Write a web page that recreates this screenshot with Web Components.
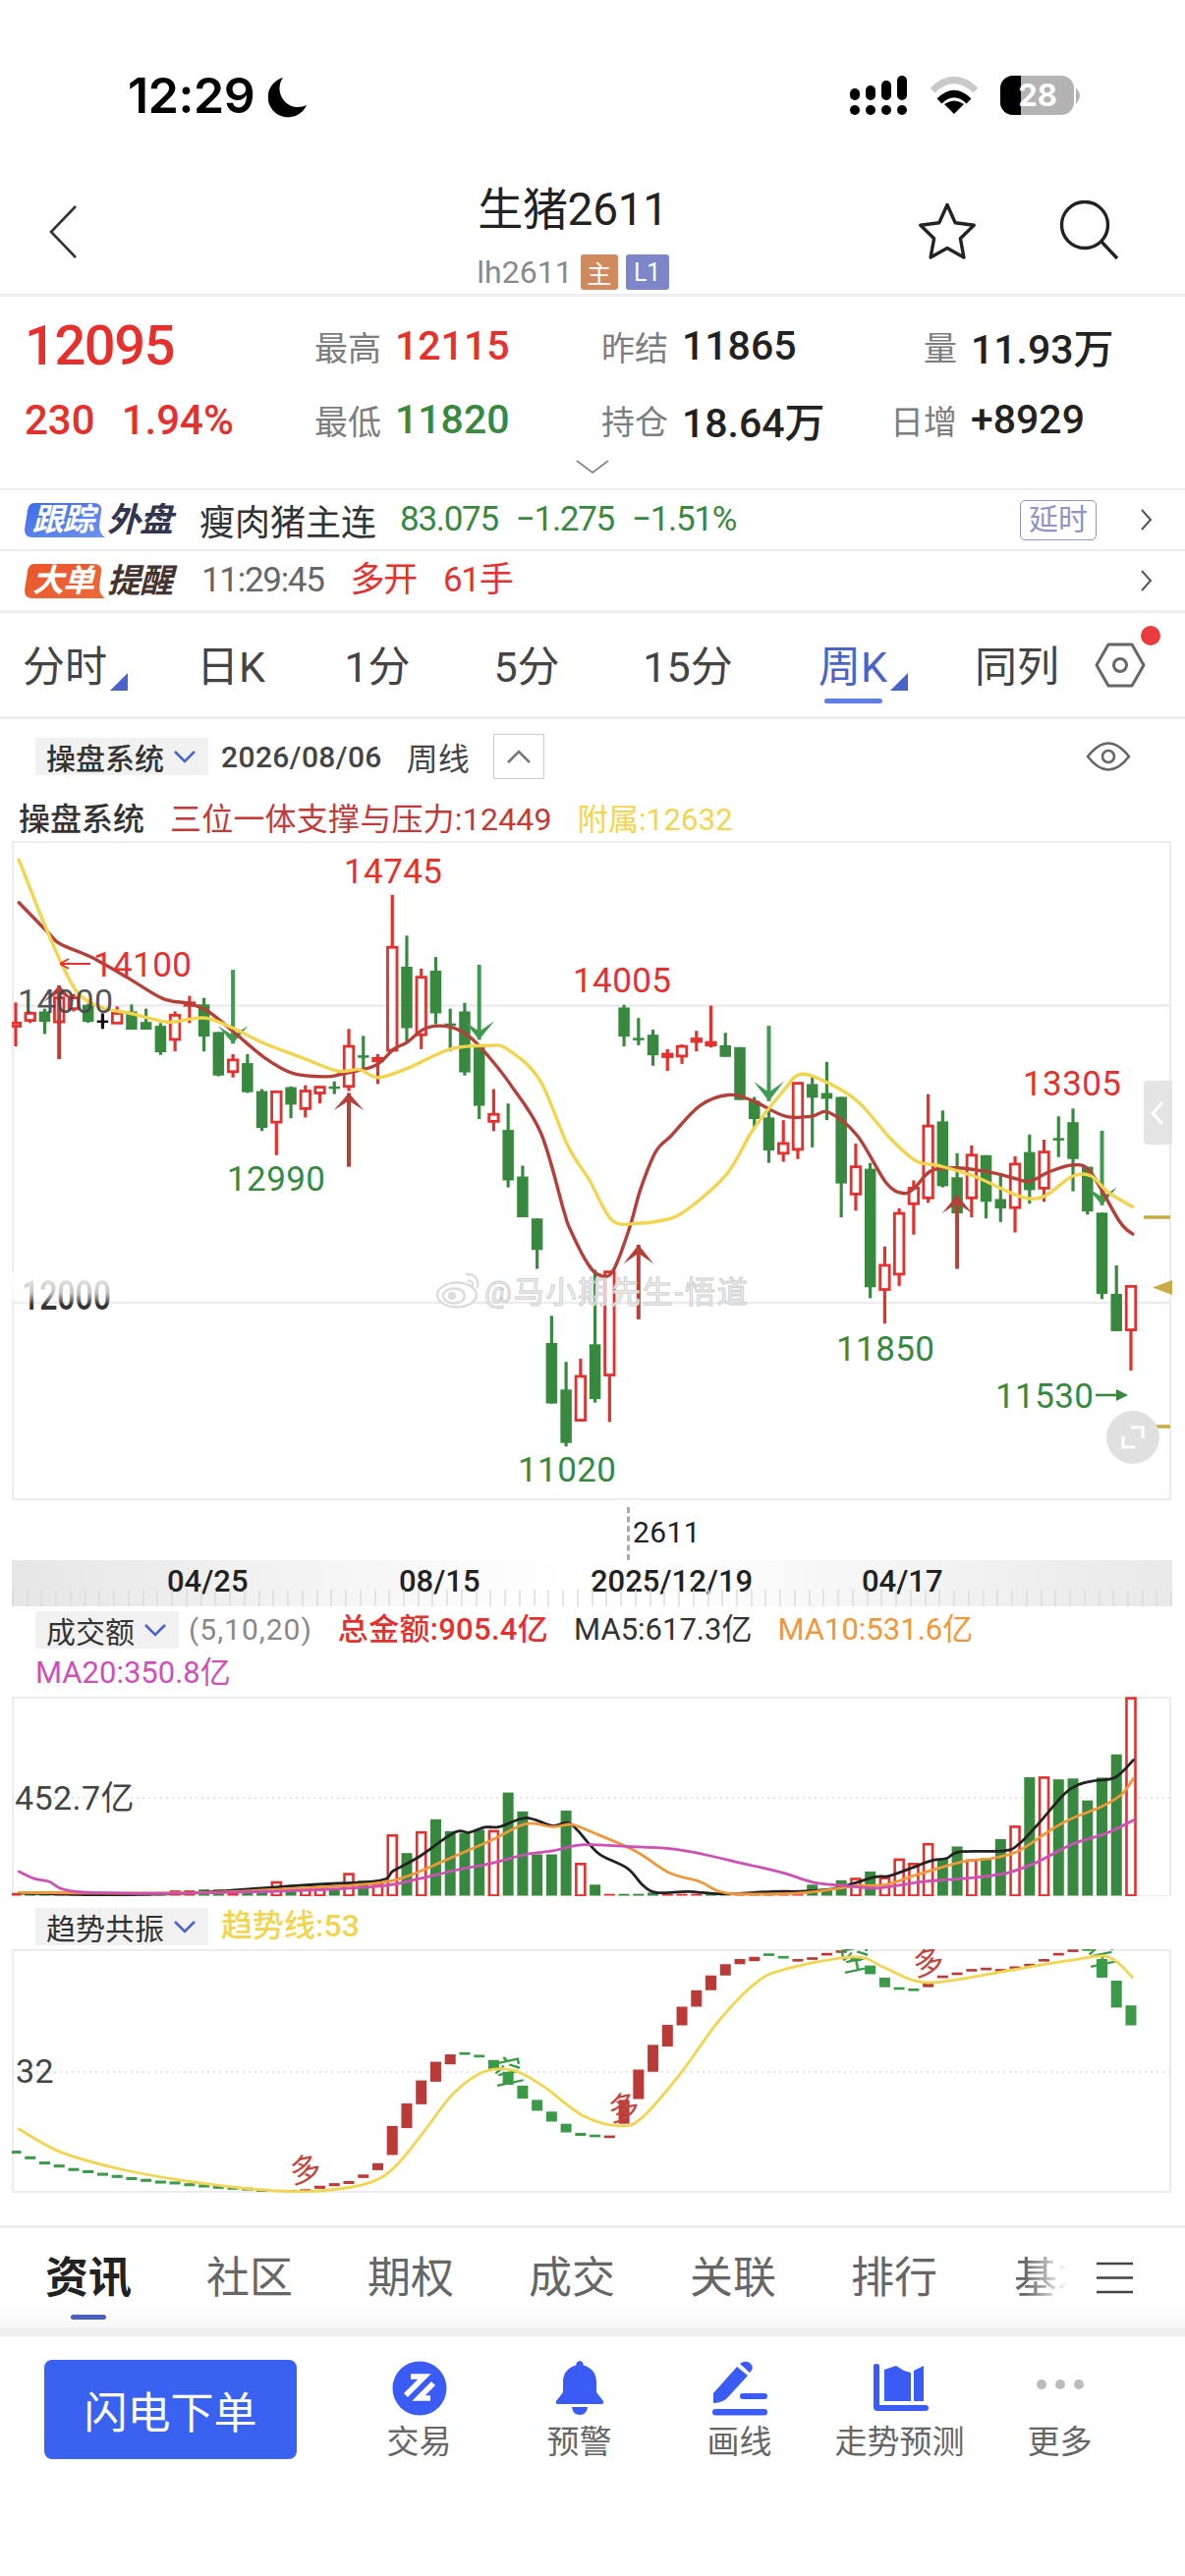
<!DOCTYPE html>
<html lang="zh">
<head>
<meta charset="utf-8">
<title>生猪2611</title>
<style>
  html, body { margin: 0; background: #fff; }
  body {
    width: 1206px;
    height: 2622px;
    overflow: hidden;
    font-family: Roboto, "Noto Sans CJK SC", sans-serif;
    color: #222;
  }
</style>
</head>
<body>
  <status-bar></status-bar>
  <nav-header></nav-header>
  <quote-panel></quote-panel>
  <ticker-row tag="跟踪" tag-color="blue" name="外盘" info="延时" gap="18">
    <span style="font-size:36px;color:#333;margin:0 6px 0 -2px">瘦肉猪主连</span>
    <legend-item color="#38893f" tight>83.075</legend-item>
    <legend-item color="#38893f" tight>−1.275</legend-item>
    <legend-item color="#38893f" tight>−1.51%</legend-item>
  </ticker-row>
  <ticker-row tag="大单" tag-color="orange" name="提醒" gap="27" last>
    <legend-item color="#666" tight>11:29:45</legend-item>
    <legend-item color="#e5302e" tight>多开</legend-item>
    <legend-item color="#e5302e" tight>61手</legend-item>
  </ticker-row>
  <period-tabs></period-tabs>
  <chart-toolbar></chart-toolbar>
  <kline-chart></kline-chart>
  <time-axis></time-axis>
  <indicator-head label="成交额" height="92" top="4" shift="10">
    <legend-item color="#888" size="30" spacing="1">(5,10,20)</legend-item>
    <legend-item color="#e5302e" size="31" weight="500" spacing=".3">总金额:905.4亿</legend-item>
    <legend-item color="#333" size="31">MA5:617.3亿</legend-item>
    <legend-item color="#f0973a" size="31">MA10:531.6亿</legend-item>
    <legend-item slot="second" color="#cf50b5" size="31">MA20:350.8亿</legend-item>
  </indicator-head>
  <volume-chart></volume-chart>
  <indicator-head label="趋势共振" height="54" top="11" shift="13">
    <legend-item color="#f2d44e" size="32" weight="500">趋势线:53</legend-item>
  </indicator-head>
  <trend-chart></trend-chart>
  <info-tabs></info-tabs>
  <bottom-bar></bottom-bar>

<script>
// chart colours
const RED = "#e5302e";
const GREEN = "#38893f";
const YELLOW = "#f2d44e";
const MA_RED = "#b5403a";

// candle slot -> page x
const slotX = (i) => 16 + 14.74 * i;
// traced heights: values under 5000 come from the upper half of the chart, 5000+ from the lower half
const py = (v) => (v < 5000 ? 640 + v / 2.529 : 1250 + (v - 5000) / 2.24);
const ax = (x) => x / 2.596;
const bx = (x) => 600 + x / 2.587;

// smooth line through points (catmull-rom to bezier)
function smoothPath(pts) {
  let d = `M${pts[0][0].toFixed(1)} ${pts[0][1].toFixed(1)}`;
  for (let i = 0; i < pts.length - 1; i++) {
    const p0 = pts[i - 1] || pts[i];
    const p1 = pts[i];
    const p2 = pts[i + 1];
    const p3 = pts[i + 2] || p2;
    const c1 = [p1[0] + (p2[0] - p0[0]) / 6, p1[1] + (p2[1] - p0[1]) / 6];
    const c2 = [p2[0] - (p3[0] - p1[0]) / 6, p2[1] - (p3[1] - p1[1]) / 6];
    d += ` C${c1[0].toFixed(1)} ${c1[1].toFixed(1)} ${c2[0].toFixed(1)} ${c2[1].toFixed(1)} ${p2[0].toFixed(1)} ${p2[1].toFixed(1)}`;
  }
  return d;
}

const traced = (segments) =>
  segments.flatMap(([fx, list]) => list.map(([x, y]) => [fx(x), py(y)]));

const line = (pts, color, w = 3.4) =>
  `<path d="${smoothPath(pts)}" fill="none" stroke="${color}" stroke-width="${w}" stroke-linejoin="round" stroke-linecap="round"/>`;

const label = (x, y, text, fill, size = 35, extra = "") =>
  `<text x="${x}" y="${y}" font-size="${size}" fill="${fill}" letter-spacing="0.4" ${extra}>${text}</text>`;

/* ---------- small shared bits ---------- */

class LegendItem extends HTMLElement {
  constructor() {
    super();
    this.attachShadow({ mode: "open" });
  }
  connectedCallback() {
    const size = this.hasAttribute("tight") ? 35 : this.getAttribute("size") || 32;
    const spacing = this.hasAttribute("tight") ? -1.3 : this.getAttribute("spacing") || 0;
    this.shadowRoot.innerHTML = /*html*/ `
      <style>
        :host { display: inline-block; white-space: nowrap; line-height: 1.2; }
      </style>
      <span style="color:${this.getAttribute("color")};font-size:${size}px;font-weight:${this.getAttribute("weight") || 400};letter-spacing:${spacing}px"><slot></slot></span>
    `;
  }
}
customElements.define("legend-item", LegendItem);

class IndicatorPill extends HTMLElement {
  constructor() {
    super();
    this.attachShadow({ mode: "open" });
    this.shadowRoot.innerHTML = /*html*/ `
      <style>
        :host {
          display: inline-flex;
          align-items: center;
          gap: 9px;
          height: 38px;
          padding: 0 12px 0 11px;
          background: #f1f1f1;
          font-size: 30px;
          color: #333;
          white-space: nowrap;
        }
      </style>
      <slot></slot>
      <svg width="24" height="14" viewBox="0 0 24 14"><path d="M2 2l10 10L22 2" fill="none" stroke="#4a63c8" stroke-width="2.6"/></svg>
    `;
  }
}
customElements.define("indicator-pill", IndicatorPill);

/* ---------- top of page ---------- */

class StatusBar extends HTMLElement {
  constructor() {
    super();
    this.attachShadow({ mode: "open" });
    this.shadowRoot.innerHTML = /*html*/ `
      <style>
        :host { display: flex; height: 170px; align-items: flex-start; padding: 70px 0 0 130px; box-sizing: border-box; }
        .time { font: 600 50px/54px Inter, sans-serif; letter-spacing: -.4px; color: #000; width: 143px; white-space: nowrap; }
        .moon { margin-top: 8px; }
        .icons { margin-left: 547px; margin-top: 0; }
        text { font: 700 31px Inter, sans-serif; }
      </style>
      <span class="time">12:29</span>
      <svg class="moon" width="40" height="42" viewBox="0 0 40 42"><path d="M15 1A20.5 20.5 0 1 0 39 29A19 19 0 0 1 15 1Z" fill="#000"/></svg>
      <svg class="icons" width="245" height="55" viewBox="860 70 245 55">
        <g fill="#000">
          <rect x="865" y="90" width="10" height="12" rx="5"/><rect x="881" y="87" width="10" height="15" rx="5"/>
          <rect x="897" y="82" width="10" height="20" rx="5"/><rect x="913" y="77" width="10" height="25" rx="5"/>
          <rect x="865" y="107" width="10" height="10" rx="5"/><rect x="881" y="107" width="10" height="10" rx="5"/>
          <rect x="897" y="107" width="10" height="10" rx="5"/><rect x="913" y="107" width="10" height="10" rx="5"/>
        </g>
        <path d="M949 92Q971 71 993 92" fill="none" stroke="#c9c9c9" stroke-width="7"/>
        <path d="M956 103Q971 88 986 103" fill="none" stroke="#000" stroke-width="7"/>
        <path d="M971 116L961 106Q971 99 981 106Z" fill="#000"/>
        <rect x="1018" y="77" width="75" height="40" rx="13" fill="#b3b3b3"/>
        <path d="M1031 77H1039V117H1031A13 13 0 0 1 1018 104V90A13 13 0 0 1 1031 77Z" fill="#000"/>
        <path d="M1096 92Q1100 97 1096 103Z" fill="#b3b3b3" stroke="#b3b3b3" stroke-width="2"/>
        <text x="1056" y="108" text-anchor="middle" fill="#fff">28</text>
      </svg>
    `;
  }
}
customElements.define("status-bar", StatusBar);

class NavHeader extends HTMLElement {
  constructor() {
    super();
    this.attachShadow({ mode: "open" });
    this.shadowRoot.innerHTML = /*html*/ `
      <style>
        :host { display: flex; height: 132px; box-sizing: border-box; border-bottom: 3px solid #eee; align-items: flex-start; }
        .back { margin: 38px 0 0 49px; }
        .center { width: 400px; margin: 20px 0 0 304px; display: flex; flex-direction: column; align-items: center; }
        .title { font-size: 46px; line-height: 46px; color: #222; letter-spacing: -.3px; }
        .sub { display: flex; align-items: center; gap: 8px; margin-top: 22px; height: 38px; font-size: 32px; color: #8a8a8a; }
        .badge { display: flex; align-items: center; justify-content: center; height: 36px; border-radius: 3px; color: #fff; font-size: 25px; }
        .zhu { width: 38px; background: #d08a5e; }
        .l1 { width: 44px; background: #7f85c9; }
        .star { margin: 35px 0 0 150px; }
        .search { margin: 34px 0 0 82px; }
      </style>
      <svg class="back" width="30" height="56" viewBox="0 0 30 56"><path d="M28 2L3 28l25 26" fill="none" stroke="#333" stroke-width="2.6"/></svg>
      <div class="center">
        <div class="title">生猪2611</div>
        <div class="sub"><span>lh2611</span><span class="badge zhu">主</span><span class="badge l1">L1</span></div>
      </div>
      <svg class="star" width="62" height="62" viewBox="0 0 62 62"><path d="M31 3.5l8.2 18.2 19 2.6-13.8 13.4 3.5 19.3L31 47.5l-16.9 9.5 3.5-19.3L3.8 24.3l19-2.6z" fill="none" stroke="#222" stroke-width="3.4" stroke-linejoin="round"/></svg>
      <svg class="search" width="62" height="62" viewBox="1076 204 62 62"><circle cx="1103" cy="229" r="23.5" fill="none" stroke="#222" stroke-width="3.4"/><path d="M1120 246l16 17" stroke="#222" stroke-width="3.4" fill="none"/></svg>
    `;
  }
}
customElements.define("nav-header", NavHeader);

class StatCell extends HTMLElement {
  constructor() {
    super();
    this.attachShadow({ mode: "open" });
  }
  connectedCallback() {
    this.shadowRoot.innerHTML = /*html*/ `
      <style>
        :host { display: flex; align-items: center; gap: 14px; white-space: nowrap; }
        .k { width: 68px; text-align: right; font-size: 34px; color: #7d7d7d; white-space: nowrap; direction: rtl; }
        .v { font-size: 41px; font-weight: 500; color: ${this.getAttribute("color") || "#222"}; }
      </style>
      <span class="k">${this.getAttribute("label")}</span>
      <span class="v">${this.getAttribute("value")}</span>
    `;
  }
}
customElements.define("stat-cell", StatCell);

class QuotePanel extends HTMLElement {
  constructor() {
    super();
    this.attachShadow({ mode: "open" });
    this.shadowRoot.innerHTML = /*html*/ `
      <style>
        :host { display: block; height: 197px; box-sizing: border-box; border-bottom: 2px solid #eee; padding: 20px 0 0 25px; position: relative; }
        .grid {
          display: grid;
          grid-template-columns: 295px 292px 294px 1fr;
          grid-auto-rows: 60px;
          row-gap: 15px;
          align-items: center;
        }
        .price { font-size: 56px; font-weight: 500; color: ${RED}; letter-spacing: -1.4px; line-height: 60px; }
        .chg { font-size: 42px; font-weight: 500; color: ${RED}; display: flex; gap: 27px; }
        .more { position: absolute; left: 586px; top: 166px; }
      </style>
      <div class="grid">
        <div class="price">12095</div>
        <stat-cell label="最高" value="12115" color="${RED}"></stat-cell>
        <stat-cell label="昨结" value="11865"></stat-cell>
        <stat-cell label="量" value="11.93万"></stat-cell>
        <div class="chg"><span>230</span><span>1.94%</span></div>
        <stat-cell label="最低" value="11820" color="${GREEN}"></stat-cell>
        <stat-cell label="持仓" value="18.64万"></stat-cell>
        <stat-cell label="日增" value="+8929"></stat-cell>
      </div>
      <svg class="more" width="34" height="14" viewBox="0 0 34 14"><path d="M1 1l16 12L33 1" fill="none" stroke="#888" stroke-width="1.8"/></svg>
    `;
  }
}
customElements.define("quote-panel", QuotePanel);

class TickerRow extends HTMLElement {
  constructor() {
    super();
    this.attachShadow({ mode: "open" });
  }
  connectedCallback() {
    const blue = this.getAttribute("tag-color") === "blue";
    const info = this.getAttribute("info");
    const last = this.hasAttribute("last");
    this.shadowRoot.innerHTML = /*html*/ `
      <style>
        :host {
          display: flex; align-items: center; box-sizing: border-box;
          height: ${last ? 63 : 62}px; padding-left: 25px;
          border-bottom: ${last ? 3 : 2}px solid #eee;
        }
        .tag { position: relative; width: 82px; height: 35px; display: flex; align-items: center; justify-content: center; }
        .tag svg { position: absolute; inset: 0; }
        .tag span { position: relative; color: #fff; font-size: 32px; font-weight: 700; font-style: italic; line-height: 35px; margin-right: 4px; letter-spacing: -1px; }
        .name { width: 72px; margin-left: 2px; font-size: 34px; line-height: 35px; font-weight: 700; font-style: italic; color: ${blue ? "#33344d" : "#44332e"}; letter-spacing: -1px; }
        .body { display: flex; align-items: center; gap: ${this.getAttribute("gap")}px; margin-left: 24px; flex: 1; white-space: nowrap; }
        .info { width: 78px; height: 41px; box-sizing: border-box; border: 1.5px solid #8f93c9; border-radius: 5px; color: #8f93c9; font-size: 30px; line-height: 38px; text-align: center; margin-right: 44px; }
        .arrow { margin-right: 33px; }
      </style>
      <div class="tag">
        <svg width="82" height="35" viewBox="0 0 82 35">
          <defs><linearGradient id="g" x1="0" y1="0" x2="1" y2="1"><stop offset="0" stop-color="${blue ? "#3f6be8" : "#e8552b"}"/><stop offset="1" stop-color="${blue ? "#6c93f0" : "#ee6a3a"}"/></linearGradient></defs>
          <path d="M10 0H70Q79 0 78 8L76 23Q76 31 82 35H8Q0 35 0 27L3 8Q4 0 10 0Z" fill="url(#g)"/>
        </svg>
        <span>${this.getAttribute("tag")}</span>
      </div>
      <div class="name">${this.getAttribute("name")}</div>
      <div class="body"><slot></slot></div>
      ${info ? `<div class="info">${info}</div>` : ""}
      <svg class="arrow" width="13" height="24" viewBox="0 0 13 24"><path d="M2 2l9 10-9 10" fill="none" stroke="#555" stroke-width="2"/></svg>
    `;
  }
}
customElements.define("ticker-row", TickerRow);

/* ---------- period tabs ---------- */

class PeriodTabs extends HTMLElement {
  constructor() {
    super();
    this.attachShadow({ mode: "open" });
    const tabs = [
      ["分时", true],
      ["日K"],
      ["1分"],
      ["5分"],
      ["15分"],
      ["周K", true, true],
      ["同列"],
    ];
    this.shadowRoot.innerHTML = /*html*/ `
      <style>
        :host {
          display: grid; box-sizing: border-box; height: 108px; border-bottom: 3px solid #eee;
          grid-template-columns: 132px 206px 92px 212px 116px 220px 114px 96px;
          align-items: center; position: relative;
        }
        .tab { text-align: center; font-size: 43px; color: #444; white-space: nowrap; position: relative; padding-bottom: 4px; }
        .tab b { font-weight: 400; position: relative; display: inline-block; }
        .tab b i { position: absolute; left: calc(100% + 3px); bottom: 3px; width: 0; height: 0; border-style: solid; border-width: 0 0 18px 18px; border-color: transparent transparent #4a63c8 transparent; }
        .on { color: #4a63c8; }
        .under { position: absolute; left: 839px; top: 87px; width: 59px; height: 5px; border-radius: 3px; background: #5b80ea; }
        .hex { justify-self: center; margin-left: 0; }
        .dot { position: absolute; left: 1161px; top: 13px; width: 20px; height: 20px; border-radius: 50%; background: #ea3c3c; }
      </style>
      ${tabs
        .map(
          ([t, tri, on]) => /*html*/ `
            <div class="tab ${on ? "on" : ""}"><b>${t}${tri ? "<i></i>" : ""}</b></div>
          `
        )
        .join("")}
      <svg class="hex" width="52" height="46" viewBox="0 0 52 46"><path d="M14 2h24l12 21-12 21H14L2 23z" fill="none" stroke="#666" stroke-width="3" stroke-linejoin="round"/><circle cx="26" cy="23" r="6.5" fill="none" stroke="#666" stroke-width="3"/></svg>
      <span class="under"></span>
      <span class="dot"></span>
    `;
  }
}
customElements.define("period-tabs", PeriodTabs);

class ChartToolbar extends HTMLElement {
  constructor() {
    super();
    this.attachShadow({ mode: "open" });
    this.shadowRoot.innerHTML = /*html*/ `
      <style>
        :host { display: block; height: 124px; box-sizing: border-box; padding-top: 18px; }
        .top { display: flex; align-items: center; height: 40px; padding-left: 36px; color: #444; font-size: 30px; font-weight: 500; white-space: nowrap; }
        .date { margin-left: 13px; letter-spacing: .4px; }
        .week { margin-left: 25px; font-size: 32px; font-weight: 400; }
        .box { margin-left: 24px; width: 52px; height: 46px; box-sizing: border-box; border: 1.5px solid #ccc; display: flex; align-items: center; justify-content: center; }
        .eye { margin-left: auto; margin-right: 55px; }
        .legend { display: flex; align-items: center; gap: 26px; margin-top: 25px; padding-left: 19px; }
      </style>
      <div class="top">
        <indicator-pill>操盘系统</indicator-pill>
        <span class="date">2026/08/06</span>
        <span class="week">周线</span>
        <span class="box"><svg width="26" height="15" viewBox="0 0 26 15"><path d="M2 13L13 2l11 11" fill="none" stroke="#777" stroke-width="2.6"/></svg></span>
        <svg class="eye" width="46" height="30" viewBox="0 0 46 30"><path d="M2 15Q23 -12 44 15Q23 42 2 15Z" fill="none" stroke="#666" stroke-width="2.6"/><circle cx="23" cy="15" r="6" fill="none" stroke="#666" stroke-width="2.6"/></svg>
      </div>
      <div class="legend">
        <legend-item color="#333" size="32" weight="500">操盘系统</legend-item>
        <legend-item color="#c23a37" size="32" spacing=".2">三位一体支撑与压力:12449</legend-item>
        <legend-item color="#f2d44e" size="31" spacing=".2">附属:12632</legend-item>
      </div>
    `;
  }
}
customElements.define("chart-toolbar", ChartToolbar);

/* ---------- main candle chart ---------- */

// colour, wick top, body top, body bottom, wick bottom
const CANDLES = [
  ["r",962,1015,1023,1075],["r",985,990,1008,1015],["g",978,985,1012,1043],["r",920,950,1012,1012],
  ["r",940,950,978,985],["g",965,968,1012,1014],["k",990,1008,1012,1030],["r",972,990,1015,1015],
  ["g",967,985,1032,1032],["g",978,1012,1032,1032],["g",1015,1022,1090,1097],["r",985,995,1057,1088],
  ["r",945,963,967,1015],["g",950,967,1050,1088],["g",1038,1038,1150,1152],["r",1095,1110,1140,1155],
  ["g",1095,1118,1193,1195],["g",1185,1190,1285,1293],["r",1190,1192,1270,1355],["g",1178,1180,1225,1260],
  ["r",1175,1190,1235,1258],["r",1178,1180,1195,1222],["g",1165,1178,1182,1198],["r",1030,1075,1178,1190],
  ["g",1048,1098,1102,1138],["r",1095,1106,1110,1172],["r",685,820,1085,1085],["g",790,870,1028,1065],
  ["r",875,897,1045,1082],["g",845,880,990,1018],["g",978,1016,1020,1088],["g",963,985,1142,1150],
  ["g",1075,1075,1228,1262],["r",1185,1250,1268,1293],["g",1222,1290,1420,1438],["g",1382,1410,1515,1515],
  ["g",1518,1518,5050,5093],["g",5200,5262,5400,5400],["g",5305,5368,5490,5498],["r",5298,5338,5438,5438],
  ["g",5095,5265,5390,5398],["r",5098,5100,5335,5442],["g",968,975,1050,1075],["g",1002,1053,1057,1072],
  ["g",1032,1045,1098,1125],["r",1082,1095,1099,1138],["r",1070,1075,1100,1120],["r",1035,1056,1060,1088],
  ["r",970,1065,1069,1078],["g",1040,1072,1102,1102],["g",1077,1077,1213,1213],["g",1205,1215,1262,1285],
  ["g",1240,1258,1343,1375],["r",1265,1325,1350,1372],["r",1170,1170,1340,1365],["g",1148,1172,1207,1335],
  ["g",1115,1195,1210,1265],["g",1205,1205,1428,1515],["r",1325,1385,1455,1498],["g",1375,1390,5135,5160],
  ["r",5042,5085,5140,5218],["r",1492,1505,5105,5132],["r",1420,1440,1480,5015],["r",1198,1280,1465,1478],
  ["g",1240,1268,1435,1438],["g",1350,1412,1505,1505],["r",1330,1355,1465,1515],["g",1355,1355,1475,1518],
  ["g",1405,1468,1492,1527],["r",1358,1378,1490,5010],["g",1302,1347,1445,1480],["r",1315,1347,1440,1475],
  ["g",1255,1311,1316,1360],["g",1235,1270,1365,1448],["g",1385,1385,1500,1508],["g",1503,1503,5150,5162],
  ["g",5085,5150,5235,5235],["r",5130,5133,5232,5325],
];

const MA_MAIN = traced([
  [ax, [[50,705],[130,785],[160,812],[240,845],[340,900],[430,952],[500,965],[550,985],[620,1040],[700,1105],[775,1145],[860,1153],[900,1147],[990,1125],[1040,1082],[1075,1065],[1125,1028],[1190,1025],[1240,1050],[1290,1100],[1350,1175],[1430,1300],[1490,1500]]],
  [ax, [[1505,5000],[1545,5070]]],
  [bx, [[20,5105],[60,5100],[105,5000]]],
  [bx, [[135,1440],[175,1345],[215,1305],[290,1228],[365,1200],[430,1215],[515,1255],[585,1255],[630,1245],[705,1305],[780,1425],[825,1453],[855,1440],[900,1395],[970,1388],[1060,1400],[1120,1415],[1160,1422],[1210,1398],[1275,1380],[1320,1400],[1395,1525],[1430,1558]]],
]);

const MA_SUB = traced([
  [ax, [[50,595],[130,790],[200,930],[270,975],[345,990],[440,1012],[500,1005],[550,1003],[620,1030],[700,1068],[800,1105],[890,1138],[950,1135],[1000,1155],[1080,1130],[1190,1082],[1290,1073],[1340,1082],[1425,1160],[1500,1330]]],
  [bx, [[0,1420],[60,1523],[130,1530],[180,1525],[245,1503],[360,1405],[430,1290],[510,1190],[555,1147],[630,1170],[710,1220],[790,1310],[860,1370],[920,1382],[1015,1410],[1130,1460],[1195,1462],[1270,1410],[1320,1408],[1365,1450],[1430,1488]]],
]);

function candle([c, hi, top, bot, lo], i) {
  const x = slotX(i);
  const color = c === "g" ? GREEN : c === "r" ? RED : "#111";
  const w = 11.5;
  const y1 = py(top);
  const h = Math.max(py(bot) - y1, 2.5);
  const wick = `<path d="M${x} ${py(hi)}V${py(lo)}" stroke="${color}" stroke-width="3.2"/>`;
  if (c === "r") {
    return `${wick}<rect x="${x - w / 2 + 1}" y="${y1}" width="${w - 2}" height="${h}" fill="#fff" stroke="${color}" stroke-width="2.8"/>`;
  }
  return `${wick}<rect x="${x - w / 2}" y="${y1}" width="${w}" height="${h}" fill="${color}"/>`;
}

// down = green sell arrow, up = red buy arrow
function signal(i, from, to, wing, dir) {
  const x = slotX(i);
  const color = dir === "up" ? MA_RED : "#409a50";
  const tip = py(to);
  const wy = py(wing);
  const notch = tip + (wy - tip) * 0.45;
  return `<path d="M${x} ${py(from)}V${tip}" stroke="${color}" stroke-width="4"/>
    <path d="M${x} ${tip}L${x + 15.5} ${wy}L${x} ${notch}L${x - 15.5} ${wy}Z" fill="${color}"/>`;
}

class KlineChart extends HTMLElement {
  constructor() {
    super();
    this.attachShadow({ mode: "open" });
    this.shadowRoot.innerHTML = /*html*/ `
      <style>
        :host { display: block; width: 1182px; height: 672px; margin-left: 12px; }
        svg { display: block; }
      </style>
      <svg width="1182" height="672" viewBox="12 856 1182 672">
        <defs>
          <linearGradient id="fade" x1="0" y1="0" x2="0" y2="1"><stop offset="0" stop-color="#fff" stop-opacity=".95"/><stop offset=".65" stop-color="#fff" stop-opacity=".7"/><stop offset="1" stop-color="#fff" stop-opacity="0"/></linearGradient>
        </defs>
        <rect x="13" y="857" width="1178" height="669" fill="#fff" stroke="#ececec" stroke-width="2"/>
        <path d="M13 1023.5H1192M13 1326H1192" stroke="#ececec" stroke-width="2.4"/>

        ${CANDLES.map(candle).join("")}

        ${signal(3, 1108, 918, 960, "up")}
        ${signal(23, 1385, 1195, 1240, "up")}
        ${signal(43, 5208, 5038, 5082, "up")}
        ${signal(65, 5093, 1458, 1505, "up")}
        ${signal(15, 878, 1068, 1022, "down")}
        ${signal(32, 865, 1058, 1010, "down")}
        ${signal(52, 1022, 1216, 1165, "down")}
        ${signal(75, 1292, 1484, 1437, "down")}

        ${line(MA_MAIN, MA_RED)}
        ${line(MA_SUB, YELLOW)}

        <path d="M92 981H61M61 981L70 976M61 981L70 986" fill="none" stroke="${RED}" stroke-width="1.8"/>
        ${label(350, 899, "14745", RED)}
        ${label(95, 994, "14100", RED)}
        ${label(231, 1212, "12990", GREEN)}
        ${label(583, 1010, "14005", RED)}
        ${label(1041, 1115, "13305", RED)}
        ${label(851, 1385, "11850", GREEN)}
        ${label(1013, 1433, "11530", GREEN)}
        ${label(527, 1508, "11020", GREEN)}
        <path d="M1115 1420H1143" stroke="${GREEN}" stroke-width="2.6"/><path d="M1148 1420l-12 -6v12z" fill="${GREEN}"/>

        ${label(18, 1031, "14000", "#444", 34, 'fill-opacity=".92"')}
        <text transform="translate(22 1333) scale(1 1.35)" font-size="32" font-weight="500" fill="#333">12000</text>
        <rect x="12" y="1295" width="114" height="33" fill="url(#fade)"/>

        <!-- side widgets -->
        <path d="M1164 1239H1191M1164 1452H1191" stroke="#c9ab45" stroke-width="3.4"/>
        <path d="M1173 1310.5L1193 1303V1318Z" fill="#c9ab45"/>
        <path d="M1193 1100H1168Q1164 1100 1164 1104V1161Q1164 1165 1168 1165H1193Z" fill="#e4e4e4"/>
        <path d="M1183 1122L1173 1133L1183 1144" fill="none" stroke="#fff" stroke-width="3"/>
        <circle cx="1153" cy="1463" r="27" fill="#e0e0e0"/>
        <path d="M1143 1462V1473H1155M1151 1453H1163V1464" fill="none" stroke="#fff" stroke-width="3.2"/>

        <!-- watermark -->
        <g fill="none" stroke="#dcdcdc" stroke-width="2.4">
          <ellipse cx="465" cy="1318" rx="20" ry="12.5" fill="#fff" fill-opacity=".8"/>
          <ellipse cx="462" cy="1319" rx="11" ry="7.5"/>
          <circle cx="460" cy="1319" r="3" fill="#dcdcdc"/>
          <path d="M474 1297Q488 1296 486 1311M476 1304Q482 1303 481 1309"/>
        </g>
        <text x="493" y="1326" font-size="31" fill="#f4f4f4" fill-opacity=".85" stroke="#cdcdcd" stroke-width="1" letter-spacing="1.8">@马小期先生-悟道</text>
      </svg>
    `;
  }
}
customElements.define("kline-chart", KlineChart);

class TimeAxis extends HTMLElement {
  constructor() {
    super();
    this.attachShadow({ mode: "open" });
    const dates = [["04/25", 158], ["08/15", 394], ["2025/12/19", 589], ["04/17", 865]];
    this.shadowRoot.innerHTML = /*html*/ `
      <style>
        :host { display: block; height: 107px; position: relative; }
        .mark { position: absolute; left: 638px; top: 6px; height: 54px; width: 0; border-left: 3px dashed #aaa; }
        .contract { position: absolute; left: 644px; top: 14px; font-size: 30px; line-height: 36px; color: #222; letter-spacing: .4px; }
        .ruler {
          position: absolute; left: 12px; top: 60px; width: 1181px; height: 47px;
          background: linear-gradient(90deg, #e6e6e6, #f5f5f5 28%, #fff 48%, #fff 56%, #f5f5f5 74%, #e9e9e9);
        }
        .ruler::after {
          content: ""; position: absolute; left: 0; right: 0; bottom: 0; height: 17px;
          background: repeating-linear-gradient(90deg, #dcdcdc 0 2px, transparent 2px 14.74px);
          opacity: .75;
        }
        .ruler span { position: absolute; top: 7px; font-size: 31px; font-weight: 500; line-height: 30px; color: #222; }
      </style>
      <div class="mark"></div>
      <div class="contract">2611</div>
      <div class="ruler">
        ${dates.map(([d, x]) => `<span style="left:${x}px">${d}</span>`).join("")}
      </div>
    `;
  }
}
customElements.define("time-axis", TimeAxis);

class IndicatorHead extends HTMLElement {
  constructor() {
    super();
    this.attachShadow({ mode: "open" });
  }
  connectedCallback() {
    this.shadowRoot.innerHTML = /*html*/ `
      <style>
        :host { display: block; box-sizing: border-box; height: ${this.getAttribute("height")}px; padding: ${this.getAttribute("top")}px 0 0 36px; }
        .row { display: flex; align-items: center; height: 39px; }
        .items { display: flex; align-items: center; gap: 26px; margin-left: ${this.getAttribute("shift")}px; }
        .second { display: block; margin-top: 6px; }
      </style>
      <div class="row">
        <indicator-pill>${this.getAttribute("label")}</indicator-pill>
        <div class="items"><slot></slot></div>
      </div>
      <div class="second"><slot name="second"></slot></div>
    `;
  }
}
customElements.define("indicator-head", IndicatorHead);

/* ---------- amount chart ---------- */

const VOLUME = [
  ["r",1516],["g",1517],["g",1517],["r",1516],["r",1516],["g",1517],["k",1518],["r",1518],["g",1518],["g",1518],
  ["g",1514],["r",1510],["r",1510],["g",1508],["g",1508],["r",1510],["g",1507],["g",1507],["r",1492],["g",1508],
  ["r",1508],["r",1508],["g",1506],["r",1473],["g",1488],["r",1495],["r",1385],["g",1425],["r",1378],["g",1348],
  ["g",1375],["g",1380],["g",1372],["r",1375],["g",1287],["g",1330],["g",1428],["g",1428],["g",1328],["r",1450],
  ["g",1497],["r",1518],["g",1518],["g",1518],["g",1515],["r",1518],["r",1518],["r",1518],["g",1518],["g",1519],
  ["r",1519],["r",1519],["r",1519],["r",1519],["r",1519],["g",1497],["g",1507],["g",1487],["r",1484],["g",1467],
  ["r",1482],["r",1440],["r",1450],["r",1405],["g",1438],["g",1410],["r",1442],["g",1437],["g",1393],["r",1365],
  ["g",1252],["r",1253],["g",1257],["g",1255],["g",1305],["g",1253],["g",1200],["r",1072],
];

const low = (list) => list.map(([x, y]) => [x, 5000 + y]);
const VOL_MA5 = traced([
  [ax, low([[50,1516],[280,1520],[500,1516],[800,1498],[1000,1488],[1040,1465],[1110,1432],[1200,1378],[1240,1378],[1280,1366],[1320,1365],[1390,1345],[1460,1363],[1505,1357]])],
  [bx, low([[0,1405],[30,1430],[100,1460],[140,1498],[175,1515],[260,1513],[350,1518],[480,1513],[570,1512],[650,1505],[750,1480],[790,1477],[860,1455],[900,1442],[940,1437],[975,1422],[1090,1420],[1130,1405],[1180,1360],[1250,1290],[1290,1268],[1330,1260],[1385,1252],[1432,1213]])],
]);
const VOL_MA10 = traced([
  [ax, low([[50,1515],[500,1516],[800,1505],[1010,1492],[1100,1470],[1180,1440],[1300,1395],[1390,1358],[1460,1365],[1510,1360]])],
  [bx, low([[0,1375],[120,1420],[210,1470],[290,1490],[340,1512],[400,1518],[570,1515],[700,1500],[780,1497],[860,1475],[980,1445],[1060,1437],[1130,1420],[1210,1375],[1260,1350],[1350,1318],[1400,1292],[1432,1255]])],
]);
const VOL_MA20 = traced([
  [ax, low([[50,1467],[90,1483],[130,1490],[165,1507],[240,1515],[500,1516],[800,1510],[1010,1500],[1100,1485],[1200,1465],[1300,1448],[1390,1428],[1460,1420],[1520,1408]])],
  [bx, low([[0,1406],[100,1410],[210,1415],[300,1428],[400,1448],[510,1470],[590,1492],[680,1500],[760,1505],[880,1490],[1000,1482],[1100,1470],[1180,1445],[1270,1405],[1360,1380],[1432,1350]])],
]);

class VolumeChart extends HTMLElement {
  constructor() {
    super();
    this.attachShadow({ mode: "open" });
    const bottom = py(6522);
    const bars = VOLUME.map(([c, t], i) => {
      const x = slotX(i);
      const top = py(5000 + t);
      const h = bottom - top;
      if (c === "r" && h > 6) {
        return `<rect x="${x - 4.5}" y="${top}" width="9" height="${h}" fill="#fff" stroke="${RED}" stroke-width="2.6"/>`;
      }
      const color = c === "r" ? RED : c === "k" ? "#222" : GREEN;
      return `<rect x="${x - 5.5}" y="${top}" width="11" height="${h}" fill="${color}"/>`;
    }).join("");
    this.shadowRoot.innerHTML = /*html*/ `
      <style>
        :host { display: block; width: 1182px; height: 203px; margin-left: 12px; }
        svg { display: block; }
      </style>
      <svg width="1182" height="203" viewBox="12 1727 1182 203">
        <rect x="13" y="1728" width="1178" height="202" fill="#fff" stroke="#ececec" stroke-width="2"/>
        <path d="M13 1830H1191" stroke="#e4e4e4" stroke-width="2" stroke-dasharray="2 4"/>
        ${label(15, 1842, "452.7亿", "#444", 34)}
        ${bars}
        ${line(VOL_MA5, "#222", 2.8)}
        ${line(VOL_MA10, "#f0973a", 2.8)}
        ${line(VOL_MA20, "#cf50b5", 2.8)}
      </svg>
    `;
  }
}
customElements.define("volume-chart", VolumeChart);

/* ---------- trend chart ---------- */

// colour, top, bottom
const TREND = [
  ["g",587,594],["g",600,607],["g",612,619],["g",619,626],["g",627,634],["g",632,639],["g",638,645],["g",643,650],
  ["g",648,655],["g",652,659],["g",656,663],["g",658,665],["g",662,669],["g",665,672],["g",668,675],["g",670,677],
  ["g",672,679],["g",675,682],["g",678,682],
  ["r",678,683],["r",676,682],["r",668,675],["r",662,669],["r",657,664],["r",642,650],["r",616,632],["r",530,597],
  ["r",478,535],["r",425,480],["r",382,428],["r",365,388],["g",360,366],["g",366,372],["g",378,400],["g",405,435],
  ["g",437,467],["g",470,495],["g",497,520],["g",525,545],["g",546,553],["g",550,556],["r",552,558],["r",470,525],
  ["r",400,468],["r",343,405],["r",297,347],["r",255,298],["r",217,255],["r",183,217],["r",157,183],["r",145,157],
  ["r",140,150],["g",132,138],["g",138,144],["r",145,151],["r",141,147],["r",131,137],["r",125,131],["g",140,150],
  ["g",160,180],["g",188,210],["g",210,216],["g",213,219],["r",197,210],["r",183,189],["r",176,182],["r",168,174],
  ["r",165,171],["r",168,174],["r",162,168],["r",156,162],["r",145,151],["r",131,137],["r",123,129],["g",120,126],
  ["g",145,188],["g",195,257],["g",252,298],
];

const YELLOW_TREND = [[25,537],[80,590],[160,630],[250,658],[350,678],[420,680],[490,660],[525,620],[560,545],[600,455],[640,405],[680,402],[720,440],[770,505],[820,530],[850,510],[900,410],[950,290],[1000,200],[1040,168],[1130,140],[1170,165],[1210,195],[1250,197],[1340,170],[1420,147],[1460,138],[1480,155],[1498,187]]
  .map(([x, y]) => [x / 1.3, 1930 + y / 2.266]);

class TrendChart extends HTMLElement {
  constructor() {
    super();
    this.attachShadow({ mode: "open" });
    const tag = (x, y, text, color) =>
      `<text x="${x}" y="${y}" font-size="32" fill="${color}" text-anchor="middle" dominant-baseline="central" transform="rotate(-12 ${x} ${y})">${text}</text>`;
    this.shadowRoot.innerHTML = /*html*/ `
      <style>
        :host { display: block; width: 1182px; height: 248px; margin-left: 12px; }
        svg { display: block; }
      </style>
      <svg width="1182" height="248" viewBox="12 1984 1182 248">
        <rect x="13" y="1985" width="1178" height="246" fill="#fff" stroke="#ececec" stroke-width="2"/>
        <path d="M13 2109H1191" stroke="#e4e4e4" stroke-width="2" stroke-dasharray="2 4"/>
        ${label(16, 2120, "32", "#444", 34)}
        ${TREND.map(([c, t, b], i) => {
          const y = 1930 + t / 2.266;
          const h = (b - t) / 2.266;
          return `<rect x="${slotX(i) - 5.5}" y="${y}" width="11" height="${h}" fill="${c === "g" ? "#3a9a48" : "#b93a36"}"/>`;
        }).join("")}
        ${tag(311, 2209, "多", "#c24540")}
        ${tag(945, 1998, "多", "#c24540")}
        ${tag(635, 2146, "多", "#c24540")}
        ${tag(517, 2109, "空", "#3a9a48")}
        ${tag(871, 1994, "空", "#3a9a48")}
        ${tag(1121, 1988, "空", "#3a9a48")}
        ${line(YELLOW_TREND, YELLOW, 2.8)}
      </svg>
    `;
  }
}
customElements.define("trend-chart", TrendChart);

/* ---------- bottom of page ---------- */

class InfoTabs extends HTMLElement {
  constructor() {
    super();
    this.attachShadow({ mode: "open" });
    const tabs = ["社区", "期权", "成交", "关联", "排行"];
    this.shadowRoot.innerHTML = /*html*/ `
      <style>
        :host {
          display: flex; align-items: flex-start; box-sizing: border-box; position: relative;
          margin-top: 33px; height: 113px; padding: 29px 0 0 46px; gap: 76px;
          border-top: 3px solid #eee; border-bottom: 9px solid #efefef;
          background: linear-gradient(#fff 70%, #f8f8f8);
          font-size: 44px; line-height: 44px; color: #666;
        }
        .on { color: #222; font-weight: 700; position: relative; }
        .on::after { content: ""; position: absolute; left: 26px; top: 59px; width: 36px; height: 5px; border-radius: 3px; background: #4a60c0; }
        span { width: 88px; white-space: nowrap; }
        .clip { width: 54px; overflow: hidden; -webkit-mask-image: linear-gradient(90deg, #000 20%, transparent); mask-image: linear-gradient(90deg, #000 20%, transparent); margin-left: 2px; }
        svg { position: absolute; left: 1116px; top: 34px; }
      </style>
      <span class="on">资讯</span>
      ${tabs.map((t) => `<span>${t}</span>`).join("")}
      <span class="clip">基本</span>
      <svg width="37" height="33" viewBox="0 0 37 33"><path d="M0 2H37M0 16.5H37M0 31H37" stroke="#444" stroke-width="2.6"/></svg>
    `;
  }
}
customElements.define("info-tabs", InfoTabs);

class NavItem extends HTMLElement {
  constructor() {
    super();
    this.attachShadow({ mode: "open" });
  }
  connectedCallback() {
    this.shadowRoot.innerHTML = /*html*/ `
      <style>
        :host { display: flex; flex-direction: column; align-items: center; width: 163px; }
        .icon { height: 57px; display: flex; align-items: center; justify-content: center; }
        .txt { margin-top: 8px; font-size: 33px; line-height: 38px; color: #666; white-space: nowrap; }
      </style>
      <div class="icon"><slot></slot></div>
      <div class="txt">${this.getAttribute("text")}</div>
    `;
  }
}
customElements.define("nav-item", NavItem);

class BottomBar extends HTMLElement {
  constructor() {
    super();
    this.attachShadow({ mode: "open" });
    const blue = "#3a5cf5";
    this.shadowRoot.innerHTML = /*html*/ `
      <style>
        :host { display: flex; align-items: flex-start; padding: 24px 0 0 45px; }
        .buy {
          width: 257px; height: 101px; border-radius: 8px; background: #3a62f0; color: #fff;
          display: flex; align-items: center; justify-content: center; font-size: 44px; margin-right: 43px;
        }
      </style>
      <div class="buy">闪电下单</div>
      <nav-item text="交易">
        <svg width="56" height="56" viewBox="0 0 56 56">
          <circle cx="28" cy="28" r="27.5" fill="${blue}"/>
          <path d="M19 16H33L14 35M42 23L27 38H39" fill="none" stroke="#fff" stroke-width="5.5" stroke-linejoin="miter"/>
        </svg>
      </nav-item>
      <nav-item text="预警">
        <svg width="50" height="56" viewBox="0 0 50 56" fill="${blue}">
          <path d="M25 0a3.8 3.8 0 0 1 3.6 4.6C37.500 7 42 13 42 22V32L49 41Q50 44 47 44H3Q0 44 1 41L8 32V22C8 13 12.500 7 21.400 4.600A3.800 3.800 0 0 1 25 0Z"/>
          <path d="M17 47H33Q32 55 25 55Q18 55 17 47Z"/>
        </svg>
      </nav-item>
      <nav-item text="画线">
        <svg width="56" height="56" viewBox="0 0 56 56" fill="${blue}">
          <path d="M1 33L25 6L36 15L14 39Q8 43 1 43Z"/>
          <path d="M28 3Q33 -1 38 2Q43 6 39 11L38 12Z"/>
          <rect x="28" y="33" width="28" height="6" rx="3"/>
          <rect x="0" y="49" width="56" height="6.500" rx="3"/>
        </svg>
      </nav-item>
      <nav-item text="走势预测">
        <svg width="56" height="50" viewBox="0 0 56 50" fill="${blue}" style="margin-left:2px">
          <path d="M0 2Q0 0 3 0Q6 0 6 2V42H53Q56 42 56 45Q56 48 53 48H4Q0 48 0 44Z"/>
          <path d="M11 6L23 2L31 7L38 9L38 38H11Z"/>
          <path d="M41 7L51 2V38H41Z"/>
        </svg>
      </nav-item>
      <nav-item text="更多">
        <svg width="50" height="56" viewBox="0 0 50 56" fill="#bbb">
          <circle cx="6" cy="24" r="5"/><circle cx="25" cy="24" r="5"/><circle cx="44" cy="24" r="5"/>
        </svg>
      </nav-item>
    `;
  }
}
customElements.define("bottom-bar", BottomBar);
</script>
</body>
</html>
